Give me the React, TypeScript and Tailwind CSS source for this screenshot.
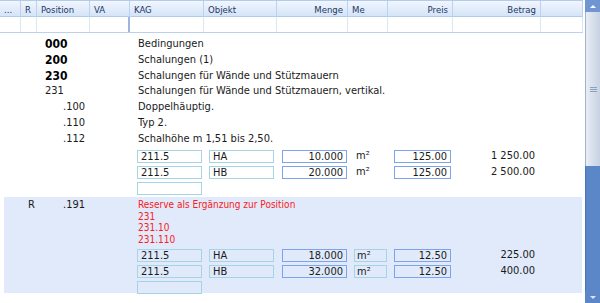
const cols = "grid grid-cols-[21px_16px_53px_40px_74px_73px_71px_40px_65px_88px_42px]";
const colsBlue = "grid grid-cols-[17px_16px_53px_40px_74px_73px_71px_40px_65px_88px_42px]";

type TextRow = { pos: string; text: string; bold?: boolean; indent?: boolean };

const textRows: TextRow[] = [
  { pos: "000", text: "Bedingungen", bold: true },
  { pos: "200", text: "Schalungen (1)", bold: true },
  { pos: "230", text: "Schalungen für Wände und Stützmauern", bold: true },
  { pos: "231", text: "Schalungen für Wände und Stützmauern, vertikal." },
  { pos: ".100", text: "Doppelhäuptig.", indent: true },
  { pos: ".110", text: "Typ 2.", indent: true },
  { pos: ".112", text: "Schalhöhe m 1,51 bis 2,50.", indent: true },
];

type Qty = { kag: string; obj: string; menge: string; me: string; preis: string; betrag: string };

const topQty: Qty[] = [
  { kag: "211.5", obj: "HA", menge: "10.000", me: "m²", preis: "125.00", betrag: "1 250.00" },
  { kag: "211.5", obj: "HB", menge: "20.000", me: "m²", preis: "125.00", betrag: "2 500.00" },
];

const blueQty: Qty[] = [
  { kag: "211.5", obj: "HA", menge: "18.000", me: "m²", preis: "12.50", betrag: "225.00" },
  { kag: "211.5", obj: "HB", menge: "32.000", me: "m²", preis: "12.50", betrag: "400.00" },
];

const headers = [
  { label: "...", align: "text-left" },
  { label: "R", align: "text-left" },
  { label: "Position", align: "text-left" },
  { label: "VA", align: "text-left" },
  { label: "KAG", align: "text-left" },
  { label: "Objekt", align: "text-left" },
  { label: "Menge", align: "text-right" },
  { label: "Me", align: "text-left" },
  { label: "Preis", align: "text-right" },
  { label: "Betrag", align: "text-right" },
  { label: "", align: "text-left" },
];

const QtyRow = ({ q, blue }: { q: Qty; blue?: boolean }) => {
  const light = blue ? "border-[#a6d4e4] bg-transparent" : "border-[#a6d4e4] bg-white";
  const strong = blue ? "border-[#7ea3ee] bg-transparent" : "border-[#7ea3ee] bg-white";
  return (
    <div className={`${blue ? colsBlue : cols} h-[16px] items-center`}>
      <div className="col-span-4" />
      <div className={`ml-[7px] w-[65px] h-[13px] border ${light} pl-[3px] leading-[11px]`}>{q.kag}</div>
      <div className={`ml-[5px] w-[65px] h-[13px] border ${light} pl-[3px] leading-[11px]`}>{q.obj}</div>
      <div className={`ml-[5px] w-[65px] h-[13px] border ${strong} pr-[3px] text-right leading-[11px]`}>{q.menge}</div>
      {blue ? (
        <div className={`ml-[6px] w-[33px] h-[13px] border ${light} pl-[2px] leading-[11px]`}>{q.me}</div>
      ) : (
        <div className="pl-[8px]">{q.me}</div>
      )}
      <div className={`ml-[6px] w-[57px] h-[13px] border ${strong} pr-[3px] text-right leading-[11px]`}>{q.preis}</div>
      <div className="pr-[6px] text-right">{q.betrag}</div>
      <div />
    </div>
  );
};

const EmptyBox = ({ blue }: { blue?: boolean }) => (
  <div className={`${blue ? colsBlue : cols} h-[16px] items-center`}>
    <div className="col-span-4" />
    <div className={`ml-[7px] w-[65px] h-[13px] border border-[#a6d4e4] ${blue ? "" : "bg-white"}`} />
  </div>
);

export default function App() {
  return (
    <div className="w-[600px] h-[303px] bg-white flex overflow-hidden font-['Tahoma','DejaVu_Sans_Condensed','DejaVu_Sans',sans-serif] text-[11px] text-[#1a1a1a]">
      <div className="w-[583px] flex flex-col">
        <div className={`${cols} h-[17px] bg-gradient-to-b from-[#f1f6fe] to-[#d5e4f8] border-t border-b border-[#b3cbeb]`}>
          {headers.map((h, i) => (
            <div
              key={i}
              className={`${h.align} px-[4px] text-[9.5px] leading-[17px] text-[#1e3763] border-r border-[#bdd2ee]`}
            >
              {h.label}
            </div>
          ))}
        </div>
        <div className={`${cols} h-[16px] border-b border-[#bcd1ee]`}>
          {headers.map((_, i) => (
            <div
              key={i}
              className={i === 3 ? "border-r-2 border-[#9db6dc]" : "border-r border-[#dbe7f6]"}
            />
          ))}
        </div>

        <div className="pt-[2px]">
          {textRows.map((r) => (
            <div key={r.pos} className={`${cols} h-[16px] items-center`}>
              <div />
              <div />
              <div
                className={`col-span-2 ${r.indent ? "pl-[26px]" : "pl-[8px]"} ${
                  r.bold ? "font-bold text-[12px] text-black" : ""
                }`}
              >
                {r.pos}
              </div>
              <div className="col-span-7 pl-[8px] whitespace-nowrap">{r.text}</div>
            </div>
          ))}
          <div className="mt-[1px]">
            {topQty.map((q, i) => (
              <QtyRow key={i} q={q} />
            ))}
            <EmptyBox />
          </div>
        </div>

        <div className="mt-[1px] ml-[4px] w-[578px] h-[96px] bg-[#e0eafb] pt-[2px]">
          <div className={`${colsBlue} items-start`}>
            <div />
            <div className="leading-[11.5px] pl-[7px]">R</div>
            <div className="col-span-2 pl-[26px] leading-[11.5px]">.191</div>
            <div className="col-span-7 pl-[8px] text-[#fb2020] text-[10px] leading-[11.5px] whitespace-nowrap">
              <div>Reserve als Ergänzung zur Position</div>
              <div>231</div>
              <div>231.10</div>
              <div>231.110</div>
            </div>
          </div>
          <div className="mt-[2px]">
            {blueQty.map((q, i) => (
              <QtyRow key={i} q={q} blue />
            ))}
            <EmptyBox blue />
          </div>
        </div>
      </div>

      <div className="ml-[2px] w-[15px] h-full flex flex-col">
        <div className="h-[12px] bg-[#6f95d3] flex items-center justify-center">
          <div className="w-0 h-0 border-l-[3px] border-r-[3px] border-b-[3px] border-l-transparent border-r-transparent border-b-white" />
        </div>
        <div className="h-[154px] bg-gradient-to-r from-[#e9eef6] via-[#d7dfeb] to-[#c7d2e3] border-l border-[#9fb2cf] flex items-center justify-center">
          <div className="flex flex-col gap-[1px]">
            <div className="w-[7px] h-[1px] bg-[#8aa0c2]" />
            <div className="w-[7px] h-[1px] bg-[#8aa0c2]" />
            <div className="w-[7px] h-[1px] bg-[#8aa0c2]" />
          </div>
        </div>
        <div className="flex-1 bg-[#5b86c8] border-l border-[#4a74b6]" />
        <div className="h-[12px] bg-[#5b86c8] flex items-center justify-center">
          <div className="w-0 h-0 border-l-[3px] border-r-[3px] border-t-[3px] border-l-transparent border-r-transparent border-t-[#dbe6f6]" />
        </div>
      </div>
    </div>
  );
}
